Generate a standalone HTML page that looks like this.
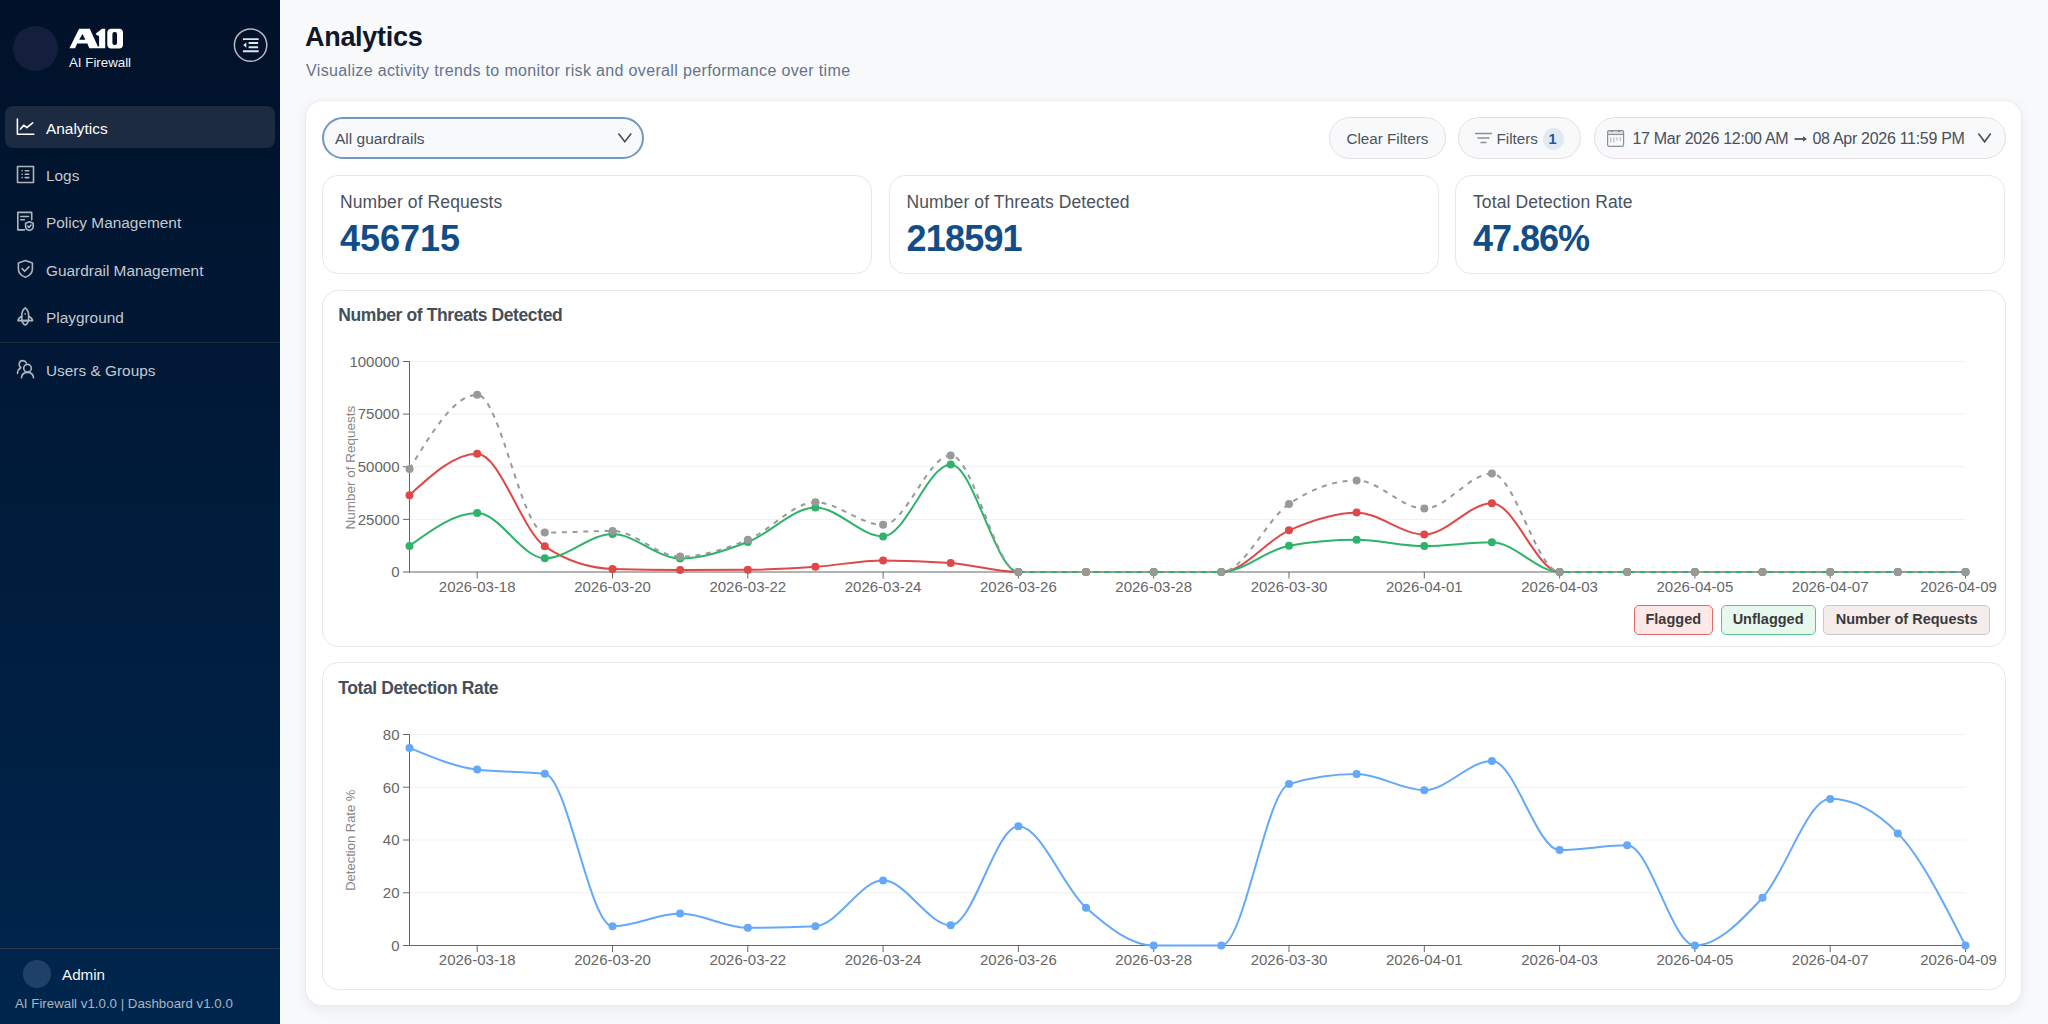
<!DOCTYPE html>
<html><head><meta charset="utf-8">
<style>
*{box-sizing:border-box;margin:0;padding:0}
html,body{width:2048px;height:1024px;overflow:hidden;background:#f8f9fb;font-family:"Liberation Sans",sans-serif}
.abs{position:absolute}
.t{position:absolute;white-space:nowrap;line-height:1}
#side{position:absolute;left:0;top:0;width:280px;height:1024px;background:linear-gradient(180deg,#011129 0%,#00264d 100%)}
.mi{position:absolute;left:46px;font-size:15.4px;color:#c3c9d1;white-space:nowrap;line-height:1}
.card{position:absolute;background:#fff;border:1px solid #e6e8ec;border-radius:16px}
.pill{position:absolute;border-radius:22px;border:1px solid #e6dfe0;background:#f8f9fb}
svg text.tk{font-family:"Liberation Sans",sans-serif;font-size:15px;fill:#666}
svg text.yl{font-family:"Liberation Sans",sans-serif;font-size:13.5px;fill:#888}
.lg{position:absolute;top:604.5px;height:30px;border-radius:5px;font-size:14.5px;font-weight:bold;color:#3a3a3a;line-height:27px;text-align:center}
</style></head><body>
<div id="side">
 <div class="abs" style="left:13px;top:26px;width:45px;height:45px;border-radius:50%;background:#141f3d"></div>
 
<svg class="abs" style="left:64px;top:24px" width="66" height="30" viewBox="0 0 66 30">
 <path fill="#fff" d="M5.4,24.2 L15.1,4.8 H25.8 L33.9,22.6 H35.1 V12.3 L31.9,10.6 V9.4 L38,4.8 H41.2 V24.2 H25.3 L23.4,19.4 H13.1 L11.1,24.2 Z M15.2,15.8 H21.4 L18.5,9.9 Z"/>
 <path fill="#fff" fill-rule="evenodd" d="M47.3,4.8 H55 Q59,4.8 59,8.8 V20.5 Q59,24.5 55,24.5 H47.3 Q43.3,24.5 43.3,20.5 V8.8 Q43.3,4.8 47.3,4.8 Z M50.4,8.1 Q48.4,8.1 48.4,10.1 V19.1 Q48.4,21.1 50.4,21.1 H51 Q53,21.1 53,19.1 V10.1 Q53,8.1 51,8.1 Z"/>
</svg>
 <div class="t" style="left:69px;top:55.5px;font-size:13.3px;color:#f2f4f6">AI Firewall</div>
 
<svg class="abs" style="left:230px;top:25px" width="40" height="40" viewBox="230 25 40 40">
 <circle cx="250.6" cy="45.1" r="16.2" fill="none" stroke="#b3b8c0" stroke-width="1.5"/>
 <path d="M242.9,39.1 H258.7 M248.6,43 H258.1 M248.6,47.3 H258.1 M242.9,51.2 H258.7" stroke="#dfe2e6" stroke-width="1.9"/>
 <path d="M246.3,42.6 V47.7 L243.2,45.1 Z" fill="#e6e8eb"/>
</svg>
 <div class="abs" style="left:5px;top:106px;width:270px;height:42px;border-radius:8px;background:#1c2b41"></div>
 <div class="mi" style="top:120.5px;color:#fff">Analytics</div>
 <div class="mi" style="top:168px">Logs</div>
 <div class="mi" style="top:215.3px">Policy Management</div>
 <div class="mi" style="top:262.6px">Guardrail Management</div>
 <div class="mi" style="top:309.9px">Playground</div>
 <div class="abs" style="left:0;top:342px;width:280px;height:1px;background:#1d2a3c"></div>
 <div class="mi" style="top:362.5px">Users &amp; Groups</div>
 <div class="abs" style="left:0;top:947.5px;width:280px;height:1px;background:#2a3347"></div>
 <div class="abs" style="left:22.7px;top:960px;width:28px;height:28px;border-radius:50%;background:#1f4168"></div>
 <div class="t" style="left:62px;top:966.6px;font-size:15.2px;color:#f4f6f8">Admin</div>
 <div class="t" style="left:15px;top:997px;font-size:13.3px;color:#aab4c1">AI Firewall v1.0.0 | Dashboard v1.0.0</div>
</div>

<svg class="abs" style="left:0;top:0" width="280" height="1024">
 <!-- analytics -->
 <path d="M17.4,119 V134.2 H33.8" fill="none" stroke="#ffffff" stroke-width="1.6" stroke-linecap="round" stroke-linejoin="round" stroke-linecap="butt"/>
 <path d="M20.5,129.1 L23.7,125.2 L26.8,127.6 L32.7,122.9" fill="none" stroke="#ffffff" stroke-width="1.6" stroke-linecap="round" stroke-linejoin="round"/>
 <!-- logs -->
 <rect x="17.5" y="166.5" width="16" height="16" fill="none" stroke="#aeb5bf" stroke-width="1.6" stroke-linecap="round" stroke-linejoin="round" stroke-linecap="butt"/>
 <path d="M22.1,170.8 h0.1 M22.1,174.3 h0.1 M22.1,177.6 h0.1" fill="none" stroke="#aeb5bf" stroke-width="1.6" stroke-linecap="round" stroke-linejoin="round"/>
 <path d="M25.2,170.8 H28.8 M25.2,174.3 H28.8 M25.2,177.6 H28.8" fill="none" stroke="#aeb5bf" stroke-width="1.6" stroke-linecap="round" stroke-linejoin="round"/>
 <!-- policy -->
 <path d="M24.6,229.9 H17.8 V212.4 H31.7 V219.8" fill="none" stroke="#aeb5bf" stroke-width="1.6" stroke-linecap="round" stroke-linejoin="round"/>
 <path d="M20.8,216.5 H28.5 M20.8,219.8 H24.4" fill="none" stroke="#aeb5bf" stroke-width="1.6" stroke-linecap="round" stroke-linejoin="round"/>
 <path d="M29.4,221.8 L33.2,223.2 V226.5 C33.2,228.6 31.5,229.9 29.4,230.6 C27.3,229.9 25.6,228.6 25.6,226.5 V223.2 Z" fill="none" stroke="#aeb5bf" stroke-width="1.6" stroke-linecap="round" stroke-linejoin="round"/>
 <path d="M27.8,226.2 L29,227.5 L31,225" fill="none" stroke="#aeb5bf" stroke-width="1.6" stroke-linecap="round" stroke-linejoin="round" stroke-width="1.3"/>
 <!-- guardrail shield -->
 <path d="M25.4,260.6 L32.4,263.1 V268.8 C32.4,273.3 29.3,276 25.4,277.2 C21.5,276 18.4,273.3 18.4,268.8 V263.1 Z" fill="none" stroke="#aeb5bf" stroke-width="1.6" stroke-linecap="round" stroke-linejoin="round"/>
 <path d="M22.1,268.6 L24.6,271.3 L29,266.9" fill="none" stroke="#aeb5bf" stroke-width="1.6" stroke-linecap="round" stroke-linejoin="round"/>
 <!-- playground rocket -->
 <path d="M25.2,307.8 C23,309.6 21.8,312 21.8,315 V320.6 H28.6 V315 C28.6,312 27.4,309.6 25.2,307.8 Z" fill="none" stroke="#aeb5bf" stroke-width="1.6" stroke-linecap="round" stroke-linejoin="round"/>
 <path d="M21.8,316.2 C19.4,317.4 18.2,319 18,320.6 H32.6 C32.4,319 31.2,317.4 28.6,316.2" fill="none" stroke="#aeb5bf" stroke-width="1.6" stroke-linecap="round" stroke-linejoin="round"/>
 <path d="M21.8,320.6 C22.6,323 24,324.8 25.2,325 C26.4,324.8 27.8,323 28.6,320.6" fill="none" stroke="#aeb5bf" stroke-width="1.6" stroke-linecap="round" stroke-linejoin="round"/>
 <circle cx="25.2" cy="313.8" r="0.9" fill="#aeb5bf"/>
 <!-- users -->
 <circle cx="27.5" cy="368.2" r="3.8" fill="none" stroke="#aeb5bf" stroke-width="1.6" stroke-linecap="round" stroke-linejoin="round"/>
 <path d="M21.4,377.8 C21.8,374.4 24.2,372.4 27.5,372.4 C30.8,372.4 33.2,374.4 33.6,377.8" fill="none" stroke="#aeb5bf" stroke-width="1.6" stroke-linecap="round" stroke-linejoin="round"/>
 <path d="M26.4,362.8 C25.6,361.3 24.2,360.6 22.8,360.6 C20.6,360.6 19.2,362.4 19.2,364.6 C19.2,366 19.9,367 20.8,367.7 C18.8,368.8 17.6,370.9 17.5,373.4" fill="none" stroke="#aeb5bf" stroke-width="1.6" stroke-linecap="round" stroke-linejoin="round"/>
</svg>

<div class="t" style="left:305px;top:24px;font-size:27px;font-weight:bold;color:#0f1729;letter-spacing:-0.3px">Analytics</div>
<div class="t" style="left:306px;top:62.5px;font-size:16px;color:#64748b;letter-spacing:0.35px">Visualize activity trends to monitor risk and overall performance over time</div>

<div class="abs" style="left:306px;top:101px;width:1715px;height:904px;background:#fff;border-radius:16px;box-shadow:0 0 0 1px rgba(226,230,236,0.5),0 4px 14px rgba(20,30,50,0.07)"></div>

<div class="abs" style="left:322px;top:117px;width:322px;height:42px;border-radius:22px;border:2px solid #7098c2;background:#f8f9fb"></div>
<div class="t" style="left:335px;top:130.5px;font-size:15.5px;color:#474f5c">All guardrails</div>
<svg class="abs" style="left:612px;top:128px" width="26" height="20"><path d="M6.5,5.5 L12.8,13.8 L19.2,5.5" fill="none" stroke="#4a4f58" stroke-width="1.6"/></svg>

<div class="pill" style="left:1329px;top:117px;width:117px;height:42px"></div>
<div class="t" style="left:1346.5px;top:130.8px;font-size:15.2px;color:#4b5360">Clear Filters</div>
<div class="pill" style="left:1458px;top:117px;width:123px;height:42px"></div>
<svg class="abs" style="left:1470px;top:128px" width="28" height="20"><path d="M5,5.5 H22 M7.5,10 H19.5 M10.5,14.6 H16.5" stroke="#8a9099" stroke-width="1.5"/></svg>
<div class="t" style="left:1496.5px;top:131px;font-size:15.2px;color:#4b5360">Filters</div>
<div class="abs" style="left:1543px;top:128px;width:21px;height:22px;border-radius:50%;background:#e2e9f2"></div>
<div class="t" style="left:1548.5px;top:132px;font-size:14.5px;font-weight:bold;color:#1d5a96">1</div>
<div class="pill" style="left:1593.5px;top:117px;width:412px;height:42px"></div>
<svg class="abs" style="left:1604px;top:126px" width="24" height="24" viewBox="1604 126 24 24">
 <rect x="1607.6" y="130.6" width="16" height="4" fill="#dcdee1"/>
 <rect x="1607.6" y="130.6" width="16" height="15.8" rx="1.6" fill="none" stroke="#8b9097" stroke-width="1.2"/>
 <path d="M1607.6,134.5 H1623.6" stroke="#8b9097" stroke-width="1.1"/>
 <circle cx="1611.9" cy="131.2" r="0.9" fill="#80858c"/><circle cx="1619.2" cy="131.2" r="0.9" fill="#80858c"/>
 <path d="M1610.8,137.3 V142.6 M1613.9,137.3 V142.6 M1617,137.3 V140.8 M1620.3,137.3 V140.8" stroke="#b9bcc0" stroke-width="1.2"/>
</svg>
<div class="t" style="left:1632.5px;top:130.5px;font-size:16px;letter-spacing:-0.3px;color:#48505a">17 Mar 2026 12:00 AM</div>
<svg class="abs" style="left:1790px;top:130px" width="22" height="16" viewBox="1790 130 22 16"><path d="M1795.2,139 H1803.5" stroke="#5d636c" stroke-width="1.8" stroke-linecap="round"/><path d="M1803,136.3 L1807,139 L1803,141.7 Z" fill="#4d535c"/></svg>
<div class="t" style="left:1812.5px;top:130.5px;font-size:16px;letter-spacing:-0.3px;color:#48505a">08 Apr 2026 11:59 PM</div>
<svg class="abs" style="left:1972px;top:128px" width="26" height="20"><path d="M6.5,5.5 L12.6,13.8 L18.7,5.5" fill="none" stroke="#4a4f58" stroke-width="1.6"/></svg>

<div class="card" style="left:322px;top:175px;width:550.3px;height:99px"></div>
<div class="card" style="left:888.5px;top:175px;width:550.3px;height:99px"></div>
<div class="card" style="left:1455px;top:175px;width:550.3px;height:99px"></div>
<div class="t" style="left:340px;top:194px;font-size:17.5px;letter-spacing:0.1px;color:#4a525d">Number of Requests</div>
<div class="t" style="left:906.5px;top:194px;font-size:17.5px;letter-spacing:0.1px;color:#4a525d">Number of Threats Detected</div>
<div class="t" style="left:1473px;top:194px;font-size:17.5px;letter-spacing:0.1px;color:#4a525d">Total Detection Rate</div>
<div class="t" style="left:340px;top:220.8px;font-size:36px;letter-spacing:0px;font-weight:bold;color:#124d88">456715</div>
<div class="t" style="left:906.5px;top:220.8px;font-size:36px;letter-spacing:-0.8px;font-weight:bold;color:#124d88">218591</div>
<div class="t" style="left:1473px;top:220.8px;font-size:36px;letter-spacing:-1px;font-weight:bold;color:#124d88">47.86%</div>

<div class="card" style="left:322px;top:290px;width:1683.5px;height:356.5px"></div>
<div class="t" style="left:338.3px;top:307px;font-size:17.5px;letter-spacing:-0.4px;font-weight:bold;color:#464e5a">Number of Threats Detected</div>
<div class="card" style="left:322px;top:662px;width:1683.5px;height:327.5px"></div>
<div class="t" style="left:338.3px;top:680px;font-size:17.5px;letter-spacing:-0.4px;font-weight:bold;color:#464e5a">Total Detection Rate</div>

<div class="lg" style="left:1633.7px;width:79.2px;background:#fde8e8;border:1.2px solid #e06a6a">Flagged</div>
<div class="lg" style="left:1720.6px;width:95px;background:#e7f8ee;border:1.2px solid #5cc38a">Unflagged</div>
<div class="lg" style="left:1823.4px;width:166.4px;background:#f5ecec;border:1.2px solid #c9c9c9">Number of Requests</div>

<svg class="abs" style="left:0;top:0" width="2048" height="1024">
<line x1="410" y1="519.4" x2="1965.5" y2="519.4" stroke="#f1f1f1" stroke-width="1"/>
<line x1="410" y1="466.8" x2="1965.5" y2="466.8" stroke="#f1f1f1" stroke-width="1"/>
<line x1="410" y1="414.1" x2="1965.5" y2="414.1" stroke="#f1f1f1" stroke-width="1"/>
<line x1="410" y1="361.5" x2="1965.5" y2="361.5" stroke="#f1f1f1" stroke-width="1"/>
<line x1="409.5" y1="361" x2="409.5" y2="572.5" stroke="#666" stroke-width="1"/>
<line x1="409" y1="572" x2="1966" y2="572" stroke="#666" stroke-width="1"/>
<line x1="403" y1="572.0" x2="409.5" y2="572.0" stroke="#666" stroke-width="1"/>
<text x="399.5" y="577.3" text-anchor="end" class="tk">0</text>
<line x1="403" y1="519.4" x2="409.5" y2="519.4" stroke="#666" stroke-width="1"/>
<text x="399.5" y="524.7" text-anchor="end" class="tk">25000</text>
<line x1="403" y1="466.8" x2="409.5" y2="466.8" stroke="#666" stroke-width="1"/>
<text x="399.5" y="472.1" text-anchor="end" class="tk">50000</text>
<line x1="403" y1="414.1" x2="409.5" y2="414.1" stroke="#666" stroke-width="1"/>
<text x="399.5" y="419.4" text-anchor="end" class="tk">75000</text>
<line x1="403" y1="361.5" x2="409.5" y2="361.5" stroke="#666" stroke-width="1"/>
<text x="399.5" y="366.8" text-anchor="end" class="tk">100000</text>
<line x1="477.2" y1="572" x2="477.2" y2="578.5" stroke="#666" stroke-width="1"/>
<text x="477.2" y="591.7" text-anchor="middle" class="tk">2026-03-18</text>
<line x1="612.5" y1="572" x2="612.5" y2="578.5" stroke="#666" stroke-width="1"/>
<text x="612.5" y="591.7" text-anchor="middle" class="tk">2026-03-20</text>
<line x1="747.8" y1="572" x2="747.8" y2="578.5" stroke="#666" stroke-width="1"/>
<text x="747.8" y="591.7" text-anchor="middle" class="tk">2026-03-22</text>
<line x1="883.1" y1="572" x2="883.1" y2="578.5" stroke="#666" stroke-width="1"/>
<text x="883.1" y="591.7" text-anchor="middle" class="tk">2026-03-24</text>
<line x1="1018.4" y1="572" x2="1018.4" y2="578.5" stroke="#666" stroke-width="1"/>
<text x="1018.4" y="591.7" text-anchor="middle" class="tk">2026-03-26</text>
<line x1="1153.7" y1="572" x2="1153.7" y2="578.5" stroke="#666" stroke-width="1"/>
<text x="1153.7" y="591.7" text-anchor="middle" class="tk">2026-03-28</text>
<line x1="1289.0" y1="572" x2="1289.0" y2="578.5" stroke="#666" stroke-width="1"/>
<text x="1289.0" y="591.7" text-anchor="middle" class="tk">2026-03-30</text>
<line x1="1424.3" y1="572" x2="1424.3" y2="578.5" stroke="#666" stroke-width="1"/>
<text x="1424.3" y="591.7" text-anchor="middle" class="tk">2026-04-01</text>
<line x1="1559.6" y1="572" x2="1559.6" y2="578.5" stroke="#666" stroke-width="1"/>
<text x="1559.6" y="591.7" text-anchor="middle" class="tk">2026-04-03</text>
<line x1="1694.9" y1="572" x2="1694.9" y2="578.5" stroke="#666" stroke-width="1"/>
<text x="1694.9" y="591.7" text-anchor="middle" class="tk">2026-04-05</text>
<line x1="1830.2" y1="572" x2="1830.2" y2="578.5" stroke="#666" stroke-width="1"/>
<text x="1830.2" y="591.7" text-anchor="middle" class="tk">2026-04-07</text>
<line x1="1965.5" y1="572" x2="1965.5" y2="578.5" stroke="#666" stroke-width="1"/>
<text x="1958.5" y="591.7" text-anchor="middle" class="tk">2026-04-09</text>
<text transform="translate(355.2,467.7) rotate(-90)" text-anchor="middle" class="yl">Number of Requests</text>
<path d="M409.50,495.17 C432.05,474.43 454.60,453.70 477.15,453.70 C499.70,453.70 522.25,531.23 544.80,546.32 C567.36,561.40 589.91,568.18 612.46,568.95 C635.01,569.72 657.56,570.11 680.11,570.11 C702.66,570.11 725.21,570.00 747.76,569.79 C770.31,569.58 792.86,568.40 815.41,566.84 C837.96,565.28 860.51,560.42 883.07,560.42 C905.62,560.42 928.17,561.26 950.72,562.95 C973.27,564.63 995.82,572.00 1018.37,572.00 C1040.92,572.00 1063.47,572.00 1086.02,572.00 C1108.57,572.00 1131.12,572.00 1153.67,572.00 C1176.22,572.00 1198.78,572.00 1221.33,572.00 C1243.88,572.00 1266.43,540.21 1288.98,530.32 C1311.53,520.43 1334.08,512.64 1356.63,512.64 C1379.18,512.64 1401.73,534.53 1424.28,534.53 C1446.83,534.53 1469.38,503.17 1491.93,503.17 C1514.49,503.17 1537.04,572.00 1559.59,572.00 C1582.14,572.00 1604.69,572.00 1627.24,572.00 C1649.79,572.00 1672.34,572.00 1694.89,572.00 C1717.44,572.00 1739.99,572.00 1762.54,572.00 C1785.09,572.00 1807.64,572.00 1830.20,572.00 C1852.75,572.00 1875.30,572.00 1897.85,572.00 C1920.40,572.00 1942.95,572.00 1965.50,572.00" fill="none" stroke="#e04848" stroke-width="2"/>
<path d="M409.50,545.90 C432.05,529.48 454.60,513.06 477.15,513.06 C499.70,513.06 522.25,558.32 544.80,558.32 C567.36,558.32 589.91,534.00 612.46,534.00 C635.01,534.00 657.56,558.53 680.11,558.53 C702.66,558.53 725.21,550.51 747.76,542.00 C770.31,533.50 792.86,507.48 815.41,507.48 C837.96,507.48 860.51,536.43 883.07,536.43 C905.62,536.43 928.17,464.43 950.72,464.43 C973.27,464.43 995.82,572.00 1018.37,572.00 C1040.92,572.00 1063.47,572.00 1086.02,572.00 C1108.57,572.00 1131.12,572.00 1153.67,572.00 C1176.22,572.00 1198.78,572.00 1221.33,572.00 C1243.88,572.00 1266.43,549.62 1288.98,545.69 C1311.53,541.76 1334.08,539.79 1356.63,539.79 C1379.18,539.79 1401.73,546.11 1424.28,546.11 C1446.83,546.11 1469.38,542.32 1491.93,542.32 C1514.49,542.32 1537.04,572.00 1559.59,572.00 C1582.14,572.00 1604.69,572.00 1627.24,572.00 C1649.79,572.00 1672.34,572.00 1694.89,572.00 C1717.44,572.00 1739.99,572.00 1762.54,572.00 C1785.09,572.00 1807.64,572.00 1830.20,572.00 C1852.75,572.00 1875.30,572.00 1897.85,572.00 C1920.40,572.00 1942.95,572.00 1965.50,572.00" fill="none" stroke="#2db36a" stroke-width="2"/>
<path d="M409.50,469.07 C432.05,431.91 454.60,394.76 477.15,394.76 C499.70,394.76 522.25,532.64 544.80,532.64 C567.36,532.64 589.91,530.95 612.46,530.95 C635.01,530.95 657.56,556.63 680.11,556.63 C702.66,556.63 725.21,548.85 747.76,539.79 C770.31,530.74 792.86,502.32 815.41,502.32 C837.96,502.32 860.51,524.85 883.07,524.85 C905.62,524.85 928.17,455.38 950.72,455.38 C973.27,455.38 995.82,572.00 1018.37,572.00 C1040.92,572.00 1063.47,572.00 1086.02,572.00 C1108.57,572.00 1131.12,572.00 1153.67,572.00 C1176.22,572.00 1198.78,572.00 1221.33,572.00 C1243.88,572.00 1266.43,519.27 1288.98,504.01 C1311.53,488.75 1334.08,480.43 1356.63,480.43 C1379.18,480.43 1401.73,508.64 1424.28,508.64 C1446.83,508.64 1469.38,473.49 1491.93,473.49 C1514.49,473.49 1537.04,572.00 1559.59,572.00 C1582.14,572.00 1604.69,572.00 1627.24,572.00 C1649.79,572.00 1672.34,572.00 1694.89,572.00 C1717.44,572.00 1739.99,572.00 1762.54,572.00 C1785.09,572.00 1807.64,572.00 1830.20,572.00 C1852.75,572.00 1875.30,572.00 1897.85,572.00 C1920.40,572.00 1942.95,572.00 1965.50,572.00" fill="none" stroke="#999" stroke-width="2" stroke-dasharray="5 5.7"/>
<circle cx="409.5" cy="495.2" r="4" fill="#e04848"/>
<circle cx="477.2" cy="453.7" r="4" fill="#e04848"/>
<circle cx="544.8" cy="546.3" r="4" fill="#e04848"/>
<circle cx="612.5" cy="568.9" r="4" fill="#e04848"/>
<circle cx="680.1" cy="570.1" r="4" fill="#e04848"/>
<circle cx="747.8" cy="569.8" r="4" fill="#e04848"/>
<circle cx="815.4" cy="566.8" r="4" fill="#e04848"/>
<circle cx="883.1" cy="560.4" r="4" fill="#e04848"/>
<circle cx="950.7" cy="562.9" r="4" fill="#e04848"/>
<circle cx="1018.4" cy="572.0" r="4" fill="#e04848"/>
<circle cx="1086.0" cy="572.0" r="4" fill="#e04848"/>
<circle cx="1153.7" cy="572.0" r="4" fill="#e04848"/>
<circle cx="1221.3" cy="572.0" r="4" fill="#e04848"/>
<circle cx="1289.0" cy="530.3" r="4" fill="#e04848"/>
<circle cx="1356.6" cy="512.6" r="4" fill="#e04848"/>
<circle cx="1424.3" cy="534.5" r="4" fill="#e04848"/>
<circle cx="1491.9" cy="503.2" r="4" fill="#e04848"/>
<circle cx="1559.6" cy="572.0" r="4" fill="#e04848"/>
<circle cx="1627.2" cy="572.0" r="4" fill="#e04848"/>
<circle cx="1694.9" cy="572.0" r="4" fill="#e04848"/>
<circle cx="1762.5" cy="572.0" r="4" fill="#e04848"/>
<circle cx="1830.2" cy="572.0" r="4" fill="#e04848"/>
<circle cx="1897.8" cy="572.0" r="4" fill="#e04848"/>
<circle cx="1965.5" cy="572.0" r="4" fill="#e04848"/>
<circle cx="409.5" cy="545.9" r="4" fill="#2db36a"/>
<circle cx="477.2" cy="513.1" r="4" fill="#2db36a"/>
<circle cx="544.8" cy="558.3" r="4" fill="#2db36a"/>
<circle cx="612.5" cy="534.0" r="4" fill="#2db36a"/>
<circle cx="680.1" cy="558.5" r="4" fill="#2db36a"/>
<circle cx="747.8" cy="542.0" r="4" fill="#2db36a"/>
<circle cx="815.4" cy="507.5" r="4" fill="#2db36a"/>
<circle cx="883.1" cy="536.4" r="4" fill="#2db36a"/>
<circle cx="950.7" cy="464.4" r="4" fill="#2db36a"/>
<circle cx="1018.4" cy="572.0" r="4" fill="#2db36a"/>
<circle cx="1086.0" cy="572.0" r="4" fill="#2db36a"/>
<circle cx="1153.7" cy="572.0" r="4" fill="#2db36a"/>
<circle cx="1221.3" cy="572.0" r="4" fill="#2db36a"/>
<circle cx="1289.0" cy="545.7" r="4" fill="#2db36a"/>
<circle cx="1356.6" cy="539.8" r="4" fill="#2db36a"/>
<circle cx="1424.3" cy="546.1" r="4" fill="#2db36a"/>
<circle cx="1491.9" cy="542.3" r="4" fill="#2db36a"/>
<circle cx="1559.6" cy="572.0" r="4" fill="#2db36a"/>
<circle cx="1627.2" cy="572.0" r="4" fill="#2db36a"/>
<circle cx="1694.9" cy="572.0" r="4" fill="#2db36a"/>
<circle cx="1762.5" cy="572.0" r="4" fill="#2db36a"/>
<circle cx="1830.2" cy="572.0" r="4" fill="#2db36a"/>
<circle cx="1897.8" cy="572.0" r="4" fill="#2db36a"/>
<circle cx="1965.5" cy="572.0" r="4" fill="#2db36a"/>
<circle cx="409.5" cy="469.1" r="4" fill="#999"/>
<circle cx="477.2" cy="394.8" r="4" fill="#999"/>
<circle cx="544.8" cy="532.6" r="4" fill="#999"/>
<circle cx="612.5" cy="531.0" r="4" fill="#999"/>
<circle cx="680.1" cy="556.6" r="4" fill="#999"/>
<circle cx="747.8" cy="539.8" r="4" fill="#999"/>
<circle cx="815.4" cy="502.3" r="4" fill="#999"/>
<circle cx="883.1" cy="524.8" r="4" fill="#999"/>
<circle cx="950.7" cy="455.4" r="4" fill="#999"/>
<circle cx="1018.4" cy="572.0" r="4" fill="#999"/>
<circle cx="1086.0" cy="572.0" r="4" fill="#999"/>
<circle cx="1153.7" cy="572.0" r="4" fill="#999"/>
<circle cx="1221.3" cy="572.0" r="4" fill="#999"/>
<circle cx="1289.0" cy="504.0" r="4" fill="#999"/>
<circle cx="1356.6" cy="480.4" r="4" fill="#999"/>
<circle cx="1424.3" cy="508.6" r="4" fill="#999"/>
<circle cx="1491.9" cy="473.5" r="4" fill="#999"/>
<circle cx="1559.6" cy="572.0" r="4" fill="#999"/>
<circle cx="1627.2" cy="572.0" r="4" fill="#999"/>
<circle cx="1694.9" cy="572.0" r="4" fill="#999"/>
<circle cx="1762.5" cy="572.0" r="4" fill="#999"/>
<circle cx="1830.2" cy="572.0" r="4" fill="#999"/>
<circle cx="1897.8" cy="572.0" r="4" fill="#999"/>
<circle cx="1965.5" cy="572.0" r="4" fill="#999"/>
<line x1="410" y1="892.8" x2="1965.5" y2="892.8" stroke="#f1f1f1" stroke-width="1"/>
<line x1="410" y1="840.0" x2="1965.5" y2="840.0" stroke="#f1f1f1" stroke-width="1"/>
<line x1="410" y1="787.2" x2="1965.5" y2="787.2" stroke="#f1f1f1" stroke-width="1"/>
<line x1="410" y1="734.5" x2="1965.5" y2="734.5" stroke="#f1f1f1" stroke-width="1"/>
<line x1="409.5" y1="734" x2="409.5" y2="946" stroke="#666" stroke-width="1"/>
<line x1="409" y1="945.5" x2="1966" y2="945.5" stroke="#666" stroke-width="1"/>
<line x1="403" y1="945.5" x2="409.5" y2="945.5" stroke="#666" stroke-width="1"/>
<text x="399.5" y="950.8" text-anchor="end" class="tk">0</text>
<line x1="403" y1="892.8" x2="409.5" y2="892.8" stroke="#666" stroke-width="1"/>
<text x="399.5" y="898.0" text-anchor="end" class="tk">20</text>
<line x1="403" y1="840.0" x2="409.5" y2="840.0" stroke="#666" stroke-width="1"/>
<text x="399.5" y="845.3" text-anchor="end" class="tk">40</text>
<line x1="403" y1="787.2" x2="409.5" y2="787.2" stroke="#666" stroke-width="1"/>
<text x="399.5" y="792.5" text-anchor="end" class="tk">60</text>
<line x1="403" y1="734.5" x2="409.5" y2="734.5" stroke="#666" stroke-width="1"/>
<text x="399.5" y="739.8" text-anchor="end" class="tk">80</text>
<line x1="477.2" y1="945.5" x2="477.2" y2="952" stroke="#666" stroke-width="1"/>
<text x="477.2" y="964.8" text-anchor="middle" class="tk">2026-03-18</text>
<line x1="612.5" y1="945.5" x2="612.5" y2="952" stroke="#666" stroke-width="1"/>
<text x="612.5" y="964.8" text-anchor="middle" class="tk">2026-03-20</text>
<line x1="747.8" y1="945.5" x2="747.8" y2="952" stroke="#666" stroke-width="1"/>
<text x="747.8" y="964.8" text-anchor="middle" class="tk">2026-03-22</text>
<line x1="883.1" y1="945.5" x2="883.1" y2="952" stroke="#666" stroke-width="1"/>
<text x="883.1" y="964.8" text-anchor="middle" class="tk">2026-03-24</text>
<line x1="1018.4" y1="945.5" x2="1018.4" y2="952" stroke="#666" stroke-width="1"/>
<text x="1018.4" y="964.8" text-anchor="middle" class="tk">2026-03-26</text>
<line x1="1153.7" y1="945.5" x2="1153.7" y2="952" stroke="#666" stroke-width="1"/>
<text x="1153.7" y="964.8" text-anchor="middle" class="tk">2026-03-28</text>
<line x1="1289.0" y1="945.5" x2="1289.0" y2="952" stroke="#666" stroke-width="1"/>
<text x="1289.0" y="964.8" text-anchor="middle" class="tk">2026-03-30</text>
<line x1="1424.3" y1="945.5" x2="1424.3" y2="952" stroke="#666" stroke-width="1"/>
<text x="1424.3" y="964.8" text-anchor="middle" class="tk">2026-04-01</text>
<line x1="1559.6" y1="945.5" x2="1559.6" y2="952" stroke="#666" stroke-width="1"/>
<text x="1559.6" y="964.8" text-anchor="middle" class="tk">2026-04-03</text>
<line x1="1694.9" y1="945.5" x2="1694.9" y2="952" stroke="#666" stroke-width="1"/>
<text x="1694.9" y="964.8" text-anchor="middle" class="tk">2026-04-05</text>
<line x1="1830.2" y1="945.5" x2="1830.2" y2="952" stroke="#666" stroke-width="1"/>
<text x="1830.2" y="964.8" text-anchor="middle" class="tk">2026-04-07</text>
<line x1="1965.5" y1="945.5" x2="1965.5" y2="952" stroke="#666" stroke-width="1"/>
<text x="1958.5" y="964.8" text-anchor="middle" class="tk">2026-04-09</text>
<text transform="translate(355.2,840.2) rotate(-90)" text-anchor="middle" class="yl" style="font-size:13px">Detection Rate %</text>
<path d="M409.50,747.95 C432.05,757.36 454.60,766.77 477.15,769.58 C499.70,772.39 522.25,770.99 544.80,773.80 C567.36,776.61 589.91,926.25 612.46,926.25 C635.01,926.25 657.56,913.59 680.11,913.59 C702.66,913.59 725.21,927.83 747.76,927.83 C770.31,927.83 792.86,927.30 815.41,926.25 C837.96,925.19 860.51,880.35 883.07,880.35 C905.62,880.35 928.17,925.19 950.72,925.19 C973.27,925.19 995.82,826.28 1018.37,826.28 C1040.92,826.28 1063.47,887.91 1086.02,907.78 C1108.57,927.65 1131.12,945.50 1153.67,945.50 C1176.22,945.50 1198.78,945.50 1221.33,945.50 C1243.88,945.50 1266.43,790.77 1288.98,784.09 C1311.53,777.40 1334.08,774.06 1356.63,774.06 C1379.18,774.06 1401.73,790.15 1424.28,790.15 C1446.83,790.15 1469.38,760.88 1491.93,760.88 C1514.49,760.88 1537.04,850.02 1559.59,850.02 C1582.14,850.02 1604.69,845.27 1627.24,845.27 C1649.79,845.27 1672.34,945.50 1694.89,945.50 C1717.44,945.50 1739.99,922.20 1762.54,897.76 C1785.09,873.32 1807.64,798.86 1830.20,798.86 C1852.75,798.86 1875.30,810.37 1897.85,833.41 C1920.40,856.44 1942.95,900.97 1965.50,945.50" fill="none" stroke="#64a8fa" stroke-width="2"/>
<circle cx="409.5" cy="748.0" r="4" fill="#64a8fa"/>
<circle cx="477.2" cy="769.6" r="4" fill="#64a8fa"/>
<circle cx="544.8" cy="773.8" r="4" fill="#64a8fa"/>
<circle cx="612.5" cy="926.2" r="4" fill="#64a8fa"/>
<circle cx="680.1" cy="913.6" r="4" fill="#64a8fa"/>
<circle cx="747.8" cy="927.8" r="4" fill="#64a8fa"/>
<circle cx="815.4" cy="926.2" r="4" fill="#64a8fa"/>
<circle cx="883.1" cy="880.4" r="4" fill="#64a8fa"/>
<circle cx="950.7" cy="925.2" r="4" fill="#64a8fa"/>
<circle cx="1018.4" cy="826.3" r="4" fill="#64a8fa"/>
<circle cx="1086.0" cy="907.8" r="4" fill="#64a8fa"/>
<circle cx="1153.7" cy="945.5" r="4" fill="#64a8fa"/>
<circle cx="1221.3" cy="945.5" r="4" fill="#64a8fa"/>
<circle cx="1289.0" cy="784.1" r="4" fill="#64a8fa"/>
<circle cx="1356.6" cy="774.1" r="4" fill="#64a8fa"/>
<circle cx="1424.3" cy="790.2" r="4" fill="#64a8fa"/>
<circle cx="1491.9" cy="760.9" r="4" fill="#64a8fa"/>
<circle cx="1559.6" cy="850.0" r="4" fill="#64a8fa"/>
<circle cx="1627.2" cy="845.3" r="4" fill="#64a8fa"/>
<circle cx="1694.9" cy="945.5" r="4" fill="#64a8fa"/>
<circle cx="1762.5" cy="897.8" r="4" fill="#64a8fa"/>
<circle cx="1830.2" cy="798.9" r="4" fill="#64a8fa"/>
<circle cx="1897.8" cy="833.4" r="4" fill="#64a8fa"/>
<circle cx="1965.5" cy="945.5" r="4" fill="#64a8fa"/>
</svg>
</body></html>
